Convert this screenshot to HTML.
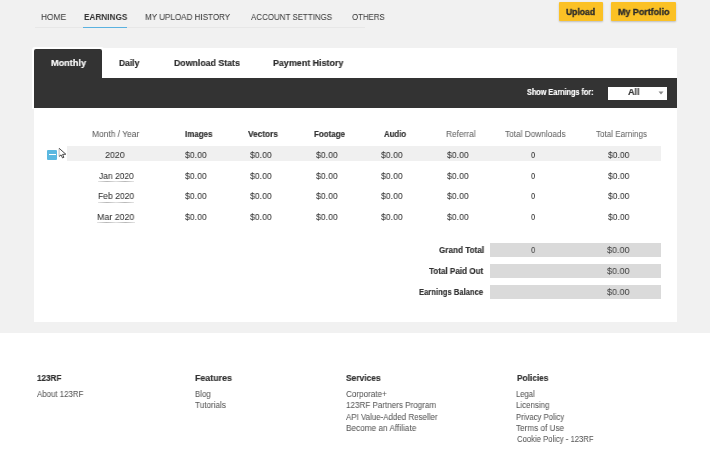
<!DOCTYPE html>
<html><head><meta charset="utf-8">
<style>
*{margin:0;padding:0;box-sizing:border-box}
html,body{width:710px;height:449px;overflow:hidden;background:#fff;font-family:"Liberation Sans",sans-serif;color:#333}
.abs{position:absolute}
.t{position:absolute;white-space:nowrap;transform-origin:0 0;will-change:transform}
.ul{position:absolute;height:1px;background:linear-gradient(90deg,#e4e4e4,#b8b8b8 25%,#e0e0e0 50%,#b8b8b8 75%,#e4e4e4)}
.tot{position:absolute;left:490px;width:171px;height:14px;background:#dadada}
.btn{position:absolute;top:1.5px;height:19.8px;background:#fbc125;border-radius:1px;box-shadow:0 1px 2px rgba(0,0,0,0.22)}
</style></head><body>
<div class="abs" style="left:0;top:0;width:710px;height:332.6px;background:#f1f1f1"></div>
<!-- nav -->
<div class="abs" style="left:35px;top:27px;width:330px;height:1px;background:#e7e7e7"></div>
<div class="abs" style="left:83px;top:26.5px;width:44px;height:1.6px;background:#5ab2e0"></div>
<div class="btn" style="left:559px;width:44px"></div>
<div class="btn" style="left:611px;width:65px"></div>

<!-- card -->
<div class="abs" style="left:34px;top:48px;width:643px;height:274px;background:#fff"></div>
<div class="abs" style="left:32px;top:47px;width:72px;height:62px;background:#fff;border-radius:3px 3px 0 0"></div>
<div class="abs" style="left:34px;top:49px;width:68px;height:29px;background:#333;border-radius:2px 2px 0 0"></div>
<div class="abs" style="left:34px;top:77.5px;width:643px;height:30.5px;background:#333"></div>
<div class="abs" style="left:608px;top:86.5px;width:59px;height:13px;background:#fff"></div>
<svg class="abs" style="left:658px;top:91px" width="6" height="4"><path d="M0.5 0.5H5.5L3 3.5Z" fill="#888"/></svg>

<!-- rows -->
<div class="abs" style="left:67px;top:146.3px;width:594px;height:15.2px;background:#f0f0f0"></div>
<div class="abs" style="left:47px;top:150px;width:10px;height:9.7px;background:#5bb8e0;border-radius:1px"></div>
<div class="abs" style="left:49px;top:154px;width:6.7px;height:1.4px;background:#fff"></div>
<svg class="abs" style="left:57px;top:147px" width="11" height="13" viewBox="0 0 11 13"><path d="M2.1 1.3L2.1 9.4L4.1 7.9L5.5 10.9L6.9 10.3L5.6 7.4L8.8 7.2Z" fill="#fff"/><path d="M2.1 1.3L2.1 9.4" stroke="#aaa" stroke-width="0.8" fill="none"/><path d="M2.1 1.3L8.8 7.2L5.6 7.4L6.9 10.3L5.5 10.9L4.1 7.9L2.1 9.4" stroke="#2a2a2a" stroke-width="0.85" fill="none" stroke-linejoin="round"/></svg>
<div class="ul" style="left:98px;top:181px;width:36px"></div>
<div class="ul" style="left:98px;top:201.5px;width:36px"></div>
<div class="ul" style="left:97px;top:222px;width:38px"></div>

<!-- totals -->
<div class="tot" style="top:243px"></div>
<div class="tot" style="top:264px"></div>
<div class="tot" style="top:285px"></div>

<span class="t" style="left:41.40px;top:10.80px;font-size:9.5px;line-height:11px;font-weight:400;color:#3c3c3c;transform:scaleX(0.8806);-webkit-text-stroke:0.05px #3c3c3c;">HOME</span>
<span class="t" style="left:83.50px;top:10.80px;font-size:9.5px;line-height:11px;font-weight:700;color:#333;transform:scaleX(0.8653);-webkit-text-stroke:0.18px #333;-webkit-text-stroke:0;">EARNINGS</span>
<span class="t" style="left:144.60px;top:10.80px;font-size:9.5px;line-height:11px;font-weight:400;color:#3c3c3c;transform:scaleX(0.8483);-webkit-text-stroke:0.05px #3c3c3c;">MY UPLOAD HISTORY</span>
<span class="t" style="left:251.00px;top:10.80px;font-size:9.5px;line-height:11px;font-weight:400;color:#3c3c3c;transform:scaleX(0.8370);-webkit-text-stroke:0.05px #3c3c3c;">ACCOUNT SETTINGS</span>
<span class="t" style="left:351.80px;top:10.80px;font-size:9.5px;line-height:11px;font-weight:400;color:#3c3c3c;transform:scaleX(0.8255);-webkit-text-stroke:0.05px #3c3c3c;">OTHERS</span>
<span class="t" style="left:566.20px;top:6.00px;font-size:9.5px;line-height:11px;font-weight:700;color:#2b2b2b;transform:scaleX(0.9015);-webkit-text-stroke:0.18px #2b2b2b;-webkit-text-stroke:0.35px #2b2b2b;">Upload</span>
<span class="t" style="left:618.00px;top:6.00px;font-size:9.5px;line-height:11px;font-weight:700;color:#2b2b2b;transform:scaleX(0.9386);-webkit-text-stroke:0.18px #2b2b2b;-webkit-text-stroke:0.35px #2b2b2b;">My Portfolio</span>
<span class="t" style="left:50.60px;top:57.30px;font-size:9.5px;line-height:11px;font-weight:700;color:#fff;transform:scaleX(0.9589);-webkit-text-stroke:0.18px #fff;">Monthly</span>
<span class="t" style="left:118.90px;top:57.30px;font-size:9.5px;line-height:11px;font-weight:700;color:#2e2e2e;transform:scaleX(0.8923);-webkit-text-stroke:0.18px #2e2e2e;">Daily</span>
<span class="t" style="left:173.60px;top:57.30px;font-size:9.5px;line-height:11px;font-weight:700;color:#2e2e2e;transform:scaleX(0.9243);-webkit-text-stroke:0.18px #2e2e2e;">Download Stats</span>
<span class="t" style="left:272.70px;top:57.30px;font-size:9.5px;line-height:11px;font-weight:700;color:#2e2e2e;transform:scaleX(0.9381);-webkit-text-stroke:0.18px #2e2e2e;">Payment History</span>
<span class="t" style="left:526.50px;top:86.90px;font-size:8.5px;line-height:10px;font-weight:700;color:#fff;transform:scaleX(0.8542);-webkit-text-stroke:0.18px #fff;">Show Earnings for:</span>
<span class="t" style="left:628.40px;top:85.90px;font-size:9.5px;line-height:11px;font-weight:700;color:#333;transform:scaleX(0.9478);-webkit-text-stroke:0.18px #333;">All</span>
<span class="t" style="left:92.00px;top:129.30px;font-size:9px;line-height:10px;font-weight:400;color:#5e5e5e;transform:scaleX(0.9349);-webkit-text-stroke:0.05px #5e5e5e;">Month / Year</span>
<span class="t" style="left:184.50px;top:129.30px;font-size:9px;line-height:10px;font-weight:700;color:#333;transform:scaleX(0.8836);-webkit-text-stroke:0.18px #333;">Images</span>
<span class="t" style="left:248.30px;top:129.30px;font-size:9px;line-height:10px;font-weight:700;color:#333;transform:scaleX(0.9196);-webkit-text-stroke:0.18px #333;">Vectors</span>
<span class="t" style="left:313.80px;top:129.30px;font-size:9px;line-height:10px;font-weight:700;color:#333;transform:scaleX(0.8859);-webkit-text-stroke:0.18px #333;">Footage</span>
<span class="t" style="left:383.50px;top:129.30px;font-size:9px;line-height:10px;font-weight:700;color:#333;transform:scaleX(0.8655);-webkit-text-stroke:0.18px #333;">Audio</span>
<span class="t" style="left:445.80px;top:129.30px;font-size:9px;line-height:10px;font-weight:400;color:#666;transform:scaleX(0.9247);-webkit-text-stroke:0.05px #666;">Referral</span>
<span class="t" style="left:505.40px;top:129.30px;font-size:9px;line-height:10px;font-weight:400;color:#666;transform:scaleX(0.9183);-webkit-text-stroke:0.05px #666;">Total Downloads</span>
<span class="t" style="left:595.50px;top:129.30px;font-size:9px;line-height:10px;font-weight:400;color:#666;transform:scaleX(0.8952);-webkit-text-stroke:0.05px #666;">Total Earnings</span>
<span class="t" style="left:104.70px;top:149.00px;font-size:9.5px;line-height:11px;font-weight:400;color:#333;transform:scaleX(0.9352);-webkit-text-stroke:0.05px #333;">2020</span>
<span class="t" style="left:184.50px;top:149.00px;font-size:9.5px;line-height:11px;font-weight:400;color:#333;transform:scaleX(0.9153);-webkit-text-stroke:0.05px #333;">$0.00</span>
<span class="t" style="left:250.00px;top:149.00px;font-size:9.5px;line-height:11px;font-weight:400;color:#333;transform:scaleX(0.9153);-webkit-text-stroke:0.05px #333;">$0.00</span>
<span class="t" style="left:315.60px;top:149.00px;font-size:9.5px;line-height:11px;font-weight:400;color:#333;transform:scaleX(0.9153);-webkit-text-stroke:0.05px #333;">$0.00</span>
<span class="t" style="left:381.40px;top:149.00px;font-size:9.5px;line-height:11px;font-weight:400;color:#333;transform:scaleX(0.9153);-webkit-text-stroke:0.05px #333;">$0.00</span>
<span class="t" style="left:446.50px;top:149.00px;font-size:9.5px;line-height:11px;font-weight:400;color:#333;transform:scaleX(0.9153);-webkit-text-stroke:0.05px #333;">$0.00</span>
<span class="t" style="left:531.30px;top:149.00px;font-size:9.5px;line-height:11px;font-weight:400;color:#333;transform:scaleX(0.7800);-webkit-text-stroke:0.05px #333;">0</span>
<span class="t" style="left:608.20px;top:149.00px;font-size:9.5px;line-height:11px;font-weight:400;color:#333;transform:scaleX(0.8983);-webkit-text-stroke:0.05px #333;">$0.00</span>
<span class="t" style="left:98.50px;top:169.70px;font-size:9.5px;line-height:11px;font-weight:400;color:#333;transform:scaleX(0.8890);-webkit-text-stroke:0.05px #333;">Jan 2020</span>
<span class="t" style="left:184.50px;top:169.70px;font-size:9.5px;line-height:11px;font-weight:400;color:#333;transform:scaleX(0.9153);-webkit-text-stroke:0.05px #333;">$0.00</span>
<span class="t" style="left:250.00px;top:169.70px;font-size:9.5px;line-height:11px;font-weight:400;color:#333;transform:scaleX(0.9153);-webkit-text-stroke:0.05px #333;">$0.00</span>
<span class="t" style="left:315.60px;top:169.70px;font-size:9.5px;line-height:11px;font-weight:400;color:#333;transform:scaleX(0.9153);-webkit-text-stroke:0.05px #333;">$0.00</span>
<span class="t" style="left:381.40px;top:169.70px;font-size:9.5px;line-height:11px;font-weight:400;color:#333;transform:scaleX(0.9153);-webkit-text-stroke:0.05px #333;">$0.00</span>
<span class="t" style="left:446.50px;top:169.70px;font-size:9.5px;line-height:11px;font-weight:400;color:#333;transform:scaleX(0.9153);-webkit-text-stroke:0.05px #333;">$0.00</span>
<span class="t" style="left:531.30px;top:169.70px;font-size:9.5px;line-height:11px;font-weight:400;color:#333;transform:scaleX(0.7800);-webkit-text-stroke:0.05px #333;">0</span>
<span class="t" style="left:608.20px;top:169.70px;font-size:9.5px;line-height:11px;font-weight:400;color:#333;transform:scaleX(0.8983);-webkit-text-stroke:0.05px #333;">$0.00</span>
<span class="t" style="left:98.00px;top:190.40px;font-size:9.5px;line-height:11px;font-weight:400;color:#333;transform:scaleX(0.9032);-webkit-text-stroke:0.05px #333;">Feb 2020</span>
<span class="t" style="left:184.50px;top:190.40px;font-size:9.5px;line-height:11px;font-weight:400;color:#333;transform:scaleX(0.9153);-webkit-text-stroke:0.05px #333;">$0.00</span>
<span class="t" style="left:250.00px;top:190.40px;font-size:9.5px;line-height:11px;font-weight:400;color:#333;transform:scaleX(0.9153);-webkit-text-stroke:0.05px #333;">$0.00</span>
<span class="t" style="left:315.60px;top:190.40px;font-size:9.5px;line-height:11px;font-weight:400;color:#333;transform:scaleX(0.9153);-webkit-text-stroke:0.05px #333;">$0.00</span>
<span class="t" style="left:381.40px;top:190.40px;font-size:9.5px;line-height:11px;font-weight:400;color:#333;transform:scaleX(0.9153);-webkit-text-stroke:0.05px #333;">$0.00</span>
<span class="t" style="left:446.50px;top:190.40px;font-size:9.5px;line-height:11px;font-weight:400;color:#333;transform:scaleX(0.9153);-webkit-text-stroke:0.05px #333;">$0.00</span>
<span class="t" style="left:531.30px;top:190.40px;font-size:9.5px;line-height:11px;font-weight:400;color:#333;transform:scaleX(0.7800);-webkit-text-stroke:0.05px #333;">0</span>
<span class="t" style="left:608.20px;top:190.40px;font-size:9.5px;line-height:11px;font-weight:400;color:#333;transform:scaleX(0.8983);-webkit-text-stroke:0.05px #333;">$0.00</span>
<span class="t" style="left:97.40px;top:211.00px;font-size:9.5px;line-height:11px;font-weight:400;color:#333;transform:scaleX(0.9310);-webkit-text-stroke:0.05px #333;">Mar 2020</span>
<span class="t" style="left:184.50px;top:211.00px;font-size:9.5px;line-height:11px;font-weight:400;color:#333;transform:scaleX(0.9153);-webkit-text-stroke:0.05px #333;">$0.00</span>
<span class="t" style="left:250.00px;top:211.00px;font-size:9.5px;line-height:11px;font-weight:400;color:#333;transform:scaleX(0.9153);-webkit-text-stroke:0.05px #333;">$0.00</span>
<span class="t" style="left:315.60px;top:211.00px;font-size:9.5px;line-height:11px;font-weight:400;color:#333;transform:scaleX(0.9153);-webkit-text-stroke:0.05px #333;">$0.00</span>
<span class="t" style="left:381.40px;top:211.00px;font-size:9.5px;line-height:11px;font-weight:400;color:#333;transform:scaleX(0.9153);-webkit-text-stroke:0.05px #333;">$0.00</span>
<span class="t" style="left:446.50px;top:211.00px;font-size:9.5px;line-height:11px;font-weight:400;color:#333;transform:scaleX(0.9153);-webkit-text-stroke:0.05px #333;">$0.00</span>
<span class="t" style="left:531.30px;top:211.00px;font-size:9.5px;line-height:11px;font-weight:400;color:#333;transform:scaleX(0.7800);-webkit-text-stroke:0.05px #333;">0</span>
<span class="t" style="left:608.20px;top:211.00px;font-size:9.5px;line-height:11px;font-weight:400;color:#333;transform:scaleX(0.8983);-webkit-text-stroke:0.05px #333;">$0.00</span>
<span class="t" style="left:438.60px;top:245.30px;font-size:9px;line-height:10px;font-weight:700;color:#333;transform:scaleX(0.9061);-webkit-text-stroke:0.18px #333;">Grand Total</span>
<span class="t" style="left:429.00px;top:266.30px;font-size:9px;line-height:10px;font-weight:700;color:#333;transform:scaleX(0.9000);-webkit-text-stroke:0.18px #333;">Total Paid Out</span>
<span class="t" style="left:419.20px;top:287.30px;font-size:9px;line-height:10px;font-weight:700;color:#333;transform:scaleX(0.8487);-webkit-text-stroke:0.18px #333;">Earnings Balance</span>
<span class="t" style="left:530.90px;top:244.30px;font-size:9.5px;line-height:11px;font-weight:400;color:#444;transform:scaleX(0.8200);-webkit-text-stroke:0.05px #444;">0</span>
<span class="t" style="left:606.70px;top:244.30px;font-size:9.5px;line-height:11px;font-weight:400;color:#444;transform:scaleX(0.9494);-webkit-text-stroke:0.05px #444;">$0.00</span>
<span class="t" style="left:606.70px;top:265.30px;font-size:9.5px;line-height:11px;font-weight:400;color:#444;transform:scaleX(0.9494);-webkit-text-stroke:0.05px #444;">$0.00</span>
<span class="t" style="left:606.70px;top:286.30px;font-size:9.5px;line-height:11px;font-weight:400;color:#444;transform:scaleX(0.9494);-webkit-text-stroke:0.05px #444;">$0.00</span>
<span class="t" style="left:37.40px;top:372.30px;font-size:9.5px;line-height:11px;font-weight:700;color:#333;transform:scaleX(0.8533);-webkit-text-stroke:0.18px #333;">123RF</span>
<span class="t" style="left:195.00px;top:372.30px;font-size:9.5px;line-height:11px;font-weight:700;color:#333;transform:scaleX(0.9334);-webkit-text-stroke:0.18px #333;">Features</span>
<span class="t" style="left:345.60px;top:372.30px;font-size:9.5px;line-height:11px;font-weight:700;color:#333;transform:scaleX(0.8864);-webkit-text-stroke:0.18px #333;">Services</span>
<span class="t" style="left:516.80px;top:372.30px;font-size:9.5px;line-height:11px;font-weight:700;color:#333;transform:scaleX(0.8758);-webkit-text-stroke:0.18px #333;">Policies</span>
<span class="t" style="left:37.40px;top:389.20px;font-size:9px;line-height:10px;font-weight:400;color:#585858;transform:scaleX(0.8742);-webkit-text-stroke:0.05px #585858;">About 123RF</span>
<span class="t" style="left:195.10px;top:389.20px;font-size:9px;line-height:10px;font-weight:400;color:#585858;transform:scaleX(0.8718);-webkit-text-stroke:0.05px #585858;">Blog</span>
<span class="t" style="left:195.10px;top:400.40px;font-size:9px;line-height:10px;font-weight:400;color:#585858;transform:scaleX(0.9026);-webkit-text-stroke:0.05px #585858;">Tutorials</span>
<span class="t" style="left:345.90px;top:389.20px;font-size:9px;line-height:10px;font-weight:400;color:#585858;transform:scaleX(0.9018);-webkit-text-stroke:0.05px #585858;">Corporate+</span>
<span class="t" style="left:345.60px;top:400.40px;font-size:9px;line-height:10px;font-weight:400;color:#585858;transform:scaleX(0.8966);-webkit-text-stroke:0.05px #585858;">123RF Partners Program</span>
<span class="t" style="left:345.60px;top:411.50px;font-size:9px;line-height:10px;font-weight:400;color:#585858;transform:scaleX(0.8797);-webkit-text-stroke:0.05px #585858;">API Value-Added Reseller</span>
<span class="t" style="left:345.60px;top:422.70px;font-size:9px;line-height:10px;font-weight:400;color:#585858;transform:scaleX(0.9137);-webkit-text-stroke:0.05px #585858;">Become an Affiliate</span>
<span class="t" style="left:516.40px;top:389.20px;font-size:9px;line-height:10px;font-weight:400;color:#585858;transform:scaleX(0.8492);-webkit-text-stroke:0.05px #585858;">Legal</span>
<span class="t" style="left:516.40px;top:400.40px;font-size:9px;line-height:10px;font-weight:400;color:#585858;transform:scaleX(0.8785);-webkit-text-stroke:0.05px #585858;">Licensing</span>
<span class="t" style="left:516.40px;top:411.50px;font-size:9px;line-height:10px;font-weight:400;color:#585858;transform:scaleX(0.8600);-webkit-text-stroke:0.05px #585858;">Privacy Policy</span>
<span class="t" style="left:516.40px;top:422.70px;font-size:9px;line-height:10px;font-weight:400;color:#585858;transform:scaleX(0.9074);-webkit-text-stroke:0.05px #585858;">Terms of Use</span>
<span class="t" style="left:516.80px;top:433.80px;font-size:9px;line-height:10px;font-weight:400;color:#585858;transform:scaleX(0.8552);-webkit-text-stroke:0.05px #585858;">Cookie Policy - 123RF</span>
</body></html>
